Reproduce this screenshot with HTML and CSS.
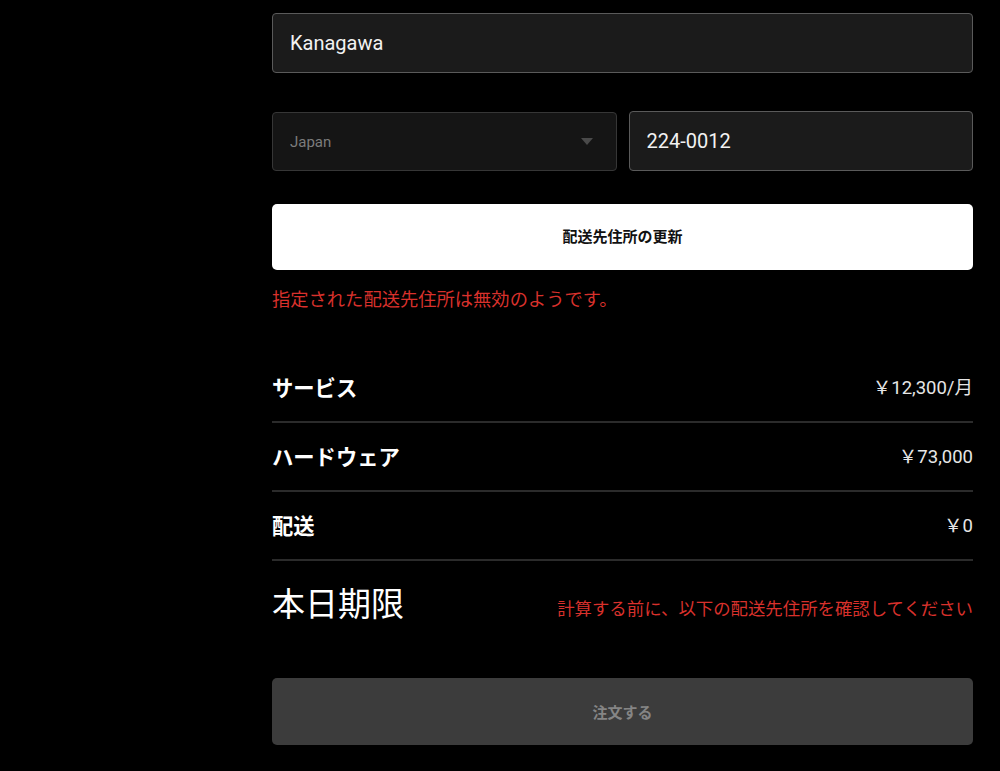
FILE: index.html
```html
<!DOCTYPE html>
<html lang="ja">
<head>
	<meta charset="utf-8">
	<title>お支払い</title>
	<link rel="stylesheet" href="styles.css">
</head>
<body>
	<main class="checkout">
		<form class="address">
			<input class="field" type="text" value="Kanagawa">
			<div class="pair">
				<div class="select-wrap">
					<select class="field select" disabled>
						<option>Japan</option>
					</select>
					<svg class="caret" width="12" height="7" viewBox="0 0 12 7"><path d="M0 0h12L6 7z" fill="#4a4a4a"/></svg>
				</div>
				<input class="field" type="text" value="224-0012">
			</div>
			<button class="btn btn-light" type="button">配送先住所の更新</button>
			<p class="error">指定された配送先住所は無効のようです。</p>
		</form>

		<ul class="summary">
			<li><span class="label">サービス</span><span class="price">￥12,300/月</span></li>
			<li><span class="label">ハードウェア</span><span class="price">￥73,000</span></li>
			<li><span class="label">配送</span><span class="price">￥0</span></li>
		</ul>

		<div class="total">
			<span class="total-label">本日期限</span>
			<span class="total-note">計算する前に、以下の配送先住所を確認してください</span>
		</div>

		<button class="btn btn-disabled" type="button" disabled>注文する</button>
	</main>
</body>
</html>
```

FILE: styles.css
```css
html, body { margin: 0; background: #000; }
body { font-family: Roboto, "Noto Sans CJK JP", sans-serif; color: #fff; }

.checkout { width: 701px; margin-left: 272px; padding-top: 13px; }

.address { display: flex; flex-direction: column; margin: 0; }
.field {
	box-sizing: border-box;
	height: 60px;
	width: 100%;
	padding: 0 17px;
	background: #1b1b1b;
	border: 1px solid #5a5a5a;
	border-radius: 4px;
	color: #f2f2f2;
	font: 400 20px Roboto, "Noto Sans CJK JP", sans-serif;
	outline: none;
}
.pair { display: grid; grid-template-columns: 1fr 1fr; gap: 12px; margin-top: 38px; }
.select-wrap { position: relative; }
.select {
	appearance: none;
	-webkit-appearance: none;
	height: 59px;
	margin-top: 1px;
	background: #151515;
	border-color: #363636;
	color: #7c7c7c;
	font-size: 15px;
	opacity: 1;
}
.caret { position: absolute; right: 24px; top: 27px; }

.btn {
	display: block;
	box-sizing: border-box;
	width: 100%;
	border: 0;
	border-radius: 5px;
	font-family: "Noto Sans CJK JP", sans-serif;
	font-size: 15px;
	font-weight: 700;
}
.btn-light { height: 66px; margin-top: 33px; padding-bottom: 4px; background: #fff; color: #111; }
.btn-disabled { height: 67px; margin-top: 41px; background: #3c3c3c; color: #858585; font-size: 15px; }

.error { margin: 15px 0 0; font-family: "Noto Sans CJK JP", sans-serif; font-size: 18.3px; line-height: 26px; color: #d8312c; }

.summary { list-style: none; margin: 43px 0 0; padding: 0; }
.summary li {
	display: flex;
	justify-content: space-between;
	align-items: center;
	height: 67px;
	border-bottom: 2px solid #2b2b2b;
}
.label { font-family: "Noto Sans CJK JP", sans-serif; font-size: 21.3px; font-weight: 700; margin-top: -3px; }
.price { font-size: 18.5px; color: #e6e6e6; margin-top: -3px; }

.total { display: flex; justify-content: space-between; align-items: center; height: 66px; margin-top: 10px; }
.total-label { font-family: "Noto Sans CJK JP", sans-serif; font-size: 33px; font-weight: 400; margin-top: -4px; }
.total-note { font-family: "Noto Sans CJK JP", sans-serif; font-size: 17.4px; color: #d8312c; margin-top: 6px; }
```
